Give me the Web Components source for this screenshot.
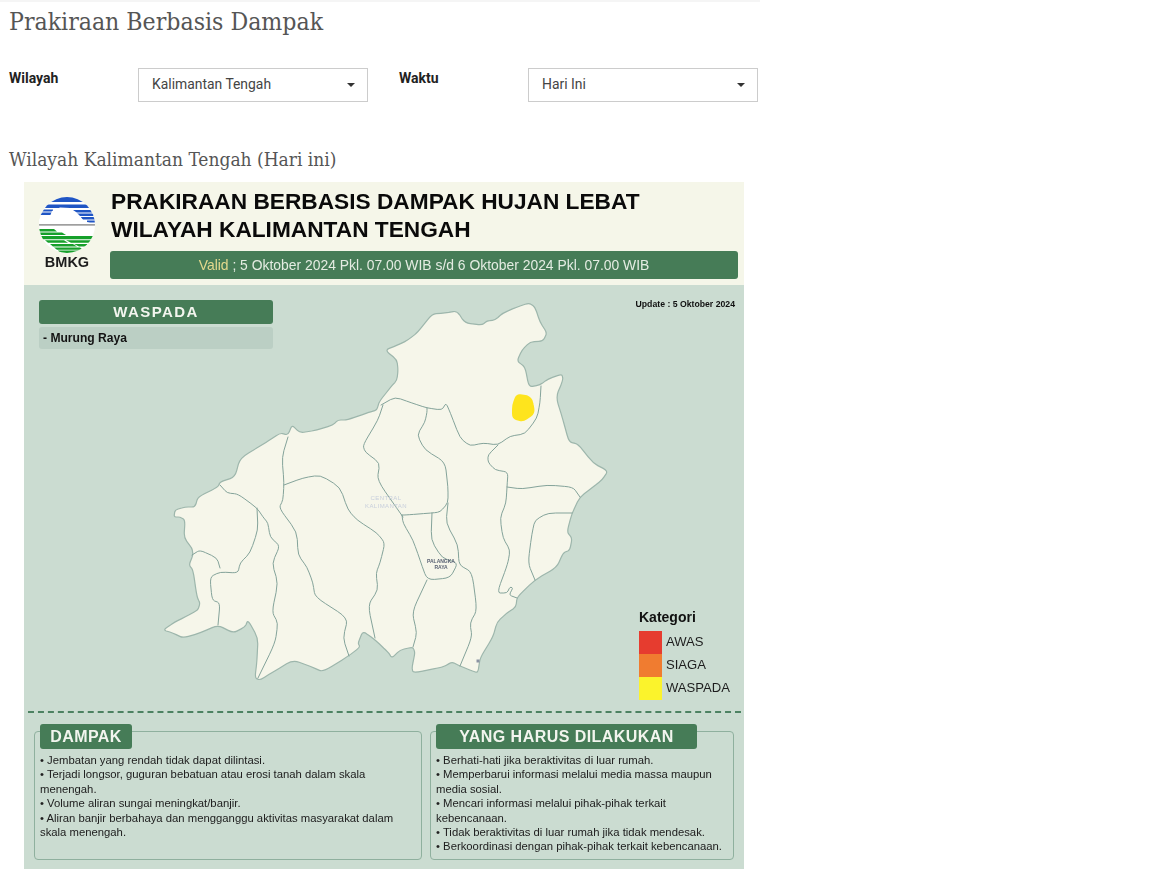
<!DOCTYPE html>
<html lang="id">
<head>
<meta charset="utf-8">
<title>Prakiraan Berbasis Dampak</title>
<style>
html,body{margin:0;padding:0;background:#fff;overflow:hidden}
body{font-family:Roboto,"Liberation Sans",sans-serif}
</style>
</head>
<body>
<impact-page></impact-page>
<script>
class PageSelect extends HTMLElement{
  constructor(){super();this.attachShadow({mode:'open'}).innerHTML=`<style>
  :host{display:flex;align-items:center;justify-content:space-between;box-sizing:border-box;width:230px;height:34px;border:1px solid #ccc;background:#fff;padding:0 12px 2px 13px;font:13.9px Roboto,sans-serif;color:#444}
  i{width:0;height:0;border:4px solid transparent;border-top-color:#333;border-bottom:0;margin-top:2px}
  </style><slot></slot><i></i>`;}
}
customElements.define('page-select',PageSelect);

class BmkgLogo extends HTMLElement{
  constructor(){super();this.attachShadow({mode:'open'}).innerHTML=`<style>
  :host{display:flex;flex-direction:column;align-items:center;width:56px;flex:none;margin-top:15px}
  svg{display:block}
  span{font:bold 14.5px "Liberation Sans",sans-serif;color:#1c1c1c;line-height:16px;margin-top:1px}
  </style>
  <svg width="56" height="56" viewBox="39 197 56 56">
  <defs><clipPath id="c"><circle cx="67" cy="225" r="28"/></clipPath></defs>
  <g clip-path="url(#c)">
    <rect x="39" y="197" width="56" height="56" fill="#fff"/>
    <g fill="#1f55c4">
      <rect x="39" y="197" width="56" height="5"/>
      <rect x="39" y="204.500" width="56" height="3.500"/>
      <rect x="39" y="209.500" width="14" height="2"/>
      <rect x="39" y="212.500" width="14" height="2.500"/>
      <rect x="70" y="210" width="25" height="2.500"/>
      <rect x="72" y="213.500" width="23" height="2.500"/>
      <rect x="80" y="217" width="15" height="2.500"/>
      <rect x="87" y="220.500" width="8" height="2"/>
    </g>
    <path fill="#fff" d="M50 216 L52 211 L60 207.500 L70 208 L76 212 L80 216 L84 221 L90 223 L95 225 L39 225 L39 218Z"/>
    <rect x="39" y="224.300" width="56" height="1.200" fill="#777"/>
    <g fill="#16a02a">
      <path d="M39 229h15l3 2.400H39z"/>
      <path d="M39 232.500h23l4 2.600H39z"/>
      <path d="M41 236h53l-1 3.200H42z"/>
      <path d="M45 240.200h19l4 2.600H48z"/>
      <path d="M66 240.200h25l-2 2.600H71z"/>
      <path d="M50 244h23l4 2.600H53z"/>
      <path d="M74 244h14l-2 2.600H79z"/>
      <path d="M54 247.500h26l3 2.200H57z"/>
      <path d="M58 250.500h22l-2 3H60z"/>
    </g>
  </g></svg><span>BMKG</span>`;}
}
customElements.define('bmkg-logo',BmkgLogo);

class PosterHeader extends HTMLElement{
  constructor(){super();this.attachShadow({mode:'open'}).innerHTML=`<style>
  :host{display:flex;box-sizing:border-box;height:103px;background:#f5f6e9;padding:0 6px 0 15px;gap:15px}
  .m{flex:1;display:flex;flex-direction:column;min-width:0;padding-top:5px}
  h2{margin:0 0 8px 1px;font:bold 22.7px/28px "Liberation Sans",sans-serif;color:#0a0a0a;white-space:nowrap}
  .v{height:28px;background:#467c57;border-radius:3px;color:#e4ece2;font:13.9px/28px "Liberation Sans",sans-serif;text-align:center}
  .v b{font-weight:normal;color:#e3d98d}
  </style><bmkg-logo></bmkg-logo><div class="m"><h2>PRAKIRAAN BERBASIS DAMPAK HUJAN LEBAT<br>WILAYAH KALIMANTAN TENGAH</h2>
  <div class="v"><b>Valid</b> ; 5 Oktober 2024 Pkl. 07.00 WIB s/d 6 Oktober 2024 Pkl. 07.00 WIB</div></div>`;}
}
customElements.define('poster-header',PosterHeader);

class LegendItem extends HTMLElement{
  constructor(){super();this.attachShadow({mode:'open'}).innerHTML=`<style>
  :host{display:flex;align-items:center;height:23px;gap:4px;font:13.1px "Liberation Sans",sans-serif;color:#1d1d1d}
  i{width:23px;height:23px;background:var(--c)}
  span{margin-top:-2px}
  </style><i></i><span><slot></slot></span>`;}
}
customElements.define('legend-item',LegendItem);

class ProvinceMap extends HTMLElement{
  constructor(){
    super();
    const r=n=>+n.toFixed(1);
    const lerp=(a,b,t)=>[r(a[0]+(b[0]-a[0])*t),r(a[1]+(b[1]-a[1])*t)];
    const T=.32;
    const smooth=(p,closed)=>{
      let d='';
      const n=p.length;
      if(closed){
        for(let i=0;i<n;i++){
          const a=lerp(p[i],p[(i-1+n)%n],T),b=lerp(p[i],p[(i+1)%n],T);
          d+=(i?'L':'M')+a[0]+' '+a[1]+'Q'+p[i][0]+' '+p[i][1]+' '+b[0]+' '+b[1];
        }
        return d+'Z';
      }
      d='M'+p[0][0]+' '+p[0][1];
      for(let i=1;i<n-1;i++){
        const a=lerp(p[i],p[i-1],T),b=lerp(p[i],p[i+1],T);
        d+='L'+a[0]+' '+a[1]+'Q'+p[i][0]+' '+p[i][1]+' '+b[0]+' '+b[1];
      }
      return d+'L'+p[n-1][0]+' '+p[n-1][1];
    };
    const outer=[[379,402],[390,388],[397,380],[398,370],[397,360],[385,350],[398,345],[408,340],[418,332],[432,314],[445,313],[457,311],[465,323],[482,325],[487,321],[495,320],[503,313],[517,307],[529,303],[535,307],[540,322],[547,333],[543,341],[530,342],[522,350],[517,361],[525,367],[529,387],[540,385],[548,379],[562,374],[563,380],[556,397],[563,420],[569,442],[578,444],[593,463],[608,471],[602,480],[593,487],[580,497],[572,513],[567,532],[572,538],[570,550],[563,553],[557,567],[535,580],[517,597],[516,607],[507,613],[497,622],[493,637],[480,658],[478,673],[470,670],[460,666],[452,662],[443,667],[413,673],[412,667],[415,653],[413,647],[400,650],[392,658],[388,652],[375,640],[363,631],[358,643],[360,647],[350,655],[323,672],[312,667],[293,660],[273,672],[260,680],[255,678],[257,660],[258,638],[248,620],[245,627],[233,633],[218,625],[200,633],[183,638],[173,633],[163,630],[175,622],[185,617],[198,610],[200,603],[197,597],[193,570],[189,565],[193,555],[192,548],[184,538],[185,520],[180,517],[174,517],[175,510],[185,507],[195,507],[198,497],[218,487],[220,482],[235,477],[240,458],[267,442],[280,433],[288,435],[292,425],[300,433],[317,430],[333,425],[338,420],[347,420],[370,412],[377,410]];
    const lines=[
     [[381,405],[395,397],[412,403],[427,408],[442,410],[446,403],[450,412],[460,438],[470,446],[483,443],[498,445],[510,436],[525,434],[537,418],[540,403],[541,386]],
     [[498,445],[488,455],[488,462],[495,470],[508,472],[507,487],[506,503],[500,518],[503,538],[510,550],[508,563],[497,593],[507,593],[510,587],[513,588],[509,595],[517,598]],
     [[507,487],[522,489],[547,485],[573,487],[580,497]],
     [[572,513],[548,513],[535,520],[532,533],[528,563],[535,580]],
     [[427,408],[427,412],[425,422],[417,435],[425,450],[445,462],[448,487],[448,503],[440,512],[432,513],[405,515],[402,515]],
     [[448,503],[446,523],[458,545],[459,565],[472,572],[477,610],[470,623],[472,637],[460,666]],
     [[432,513],[431,540],[442,558],[458,563],[450,578],[427,580],[420,560],[413,540],[403,523],[402,515]],
     [[427,580],[412,612],[417,633],[413,647]],
     [[383,405],[378,420],[363,445],[365,452],[380,463],[377,480],[403,517]],
     [[288,437],[282,457],[284,483],[283,500],[279,508],[297,532],[298,555],[307,567],[313,583],[315,597],[348,618],[343,638],[349,656]],
     [[284,485],[303,478],[320,475],[340,487],[348,510],[357,520],[377,533],[385,543],[380,563],[376,573],[378,590],[368,605],[375,638]],
     [[220,485],[227,493],[238,494],[257,508],[263,517],[268,523],[270,537],[280,546],[272,563],[278,583],[272,612],[278,623],[275,643],[258,678]],
     [[257,508],[258,530],[250,553],[240,563],[238,573],[220,572],[210,577],[212,600],[220,603],[218,625]],
     [[192,555],[200,550],[217,558],[220,568]]
    ];
    const blob=[[517,395],[527,396],[532,400],[534,413],[523,421],[513,418],[513,405]];
    this.attachShadow({mode:'open'}).innerHTML=`<style>
    :host{display:block;width:720px;height:426px}
    svg{display:block}
    text{font-family:"Liberation Sans",sans-serif;text-anchor:middle}
    </style>
    <svg width="720" height="426" viewBox="24 285 720 426">
      <path d="${smooth(outer,true)}" fill="#f6f6ea" stroke="#9db6ac" stroke-width="1.2" stroke-linejoin="round"/>
      <g fill="none" stroke="#84a39a" stroke-width="1" stroke-linejoin="round" stroke-linecap="round">
        ${lines.map(l=>`<path d="${smooth(l,false)}"/>`).join('')}
      </g>
      <path d="${smooth(blob,true)}" fill="#fee41d" stroke="#fee41d" stroke-width="2"/>
      <text x="386" y="500" font-size="6" fill="#c8cfdc" letter-spacing=".4">CENTRAL</text>
      <text x="386" y="508" font-size="6" fill="#c8cfdc" letter-spacing=".4">KALIMANTAN</text>
      <text x="441" y="563" font-size="5" font-weight="bold" fill="#5a6274">PALANGKA</text>
      <text x="441" y="568.500" font-size="5" font-weight="bold" fill="#5a6274">RAYA</text>
      <rect x="476.500" y="659.500" width="3" height="3" fill="#8b93a3"/>
    </svg>`;
  }
}
customElements.define('province-map',ProvinceMap);

class InfoBox extends HTMLElement{
  constructor(){super();this.attachShadow({mode:'open'}).innerHTML=`<style>
  :host{display:block;position:relative;box-sizing:border-box;height:129px;border:1px solid #8fb09e;border-radius:4px;padding:21px 4px 0 5px;font:11.3px/14.4px "Liberation Sans",sans-serif;color:#202020}
  h3{position:absolute;top:-8px;left:5px;width:var(--tab-w,92px);height:25px;margin:0;box-sizing:border-box;background:#467c57;border-radius:3px;color:#f2f5ee;font:bold 16px/25px "Liberation Sans",sans-serif;letter-spacing:.45px;text-align:center}
  </style><h3><slot name="title"></slot></h3><slot></slot>`;}
}
customElements.define('info-box',InfoBox);

class PosterBody extends HTMLElement{
  constructor(){super();this.attachShadow({mode:'open'}).innerHTML=`<style>
  :host{display:block;height:584px;background:#cbdcd1}
  .map{position:relative;height:426px}
  .w{position:absolute;left:15px;top:15px;width:234px}
  .w h3{margin:0 0 3px;height:24px;background:#467c57;border-radius:3px;color:#f2f5ee;font:bold 15px/23px "Liberation Sans",sans-serif;letter-spacing:1.4px;text-align:center}
  .w p{margin:0;height:22px;padding-left:4px;background:#bbcfc4;border-radius:3px;font:bold 12.1px/22px "Liberation Sans",sans-serif;color:#141414}
  .u{position:absolute;right:9px;top:14px;font:bold 8.7px/11px "Liberation Sans",sans-serif;color:#111}
  .l{position:absolute;left:615px;top:323px}
  .l h4{margin:0 0 4px;font:bold 14px/19px "Liberation Sans",sans-serif;color:#111}
  .low{border-top:2px dashed #4d8262;margin:0 3px 0 4px;padding:18px 6px 0 6px;display:grid;grid-template-columns:388px 304px;column-gap:8px}
  .b2{--tab-w:261px}
  </style>
  <div class="map">
    <province-map></province-map>
    <div class="w"><h3>WASPADA</h3><p>- Murung Raya</p></div>
    <div class="u">Update : 5 Oktober 2024</div>
    <div class="l"><h4>Kategori</h4>
      <legend-item style="--c:#e63c2f">AWAS</legend-item>
      <legend-item style="--c:#f07c30">SIAGA</legend-item>
      <legend-item style="--c:#fbf32c">WASPADA</legend-item>
    </div>
  </div>
  <div class="low">
    <info-box><span slot="title">DAMPAK</span>
      • Jembatan yang rendah tidak dapat dilintasi.<br>
      • Terjadi longsor, guguran bebatuan atau erosi tanah dalam skala<br>menengah.<br>
      • Volume aliran sungai meningkat/banjir.<br>
      • Aliran banjir berbahaya dan mengganggu aktivitas masyarakat dalam<br>skala menengah.
    </info-box>
    <info-box class="b2"><span slot="title">YANG HARUS DILAKUKAN</span>
      • Berhati-hati jika beraktivitas di luar rumah.<br>
      • Memperbarui informasi melalui media massa maupun<br>media sosial.<br>
      • Mencari informasi melalui pihak-pihak terkait<br>kebencanaan.<br>
      • Tidak beraktivitas di luar rumah jika tidak mendesak.<br>
      • Berkoordinasi dengan pihak-pihak terkait kebencanaan.
    </info-box>
  </div>`;}
}
customElements.define('poster-body',PosterBody);

class ImpactPage extends HTMLElement{
  constructor(){super();this.attachShadow({mode:'open'}).innerHTML=`<style>
  :host{display:block;width:760px;height:869px;overflow:hidden;border-top:2px solid #f5f5f5;box-sizing:border-box}
  h1{margin:0;padding:5px 0 0 9px;height:64px;box-sizing:border-box;font:normal 24.6px/30px "DejaVu Serif Condensed","DejaVu Serif",serif;color:#555}
  .f{display:grid;grid-template-columns:129px 230px 31px 129px 230px;padding-left:9px;height:34px;margin-top:2px;font:bold 14px/20px Roboto,sans-serif;color:#222}
  h2{margin:44px 0 0;padding-left:9px;height:36px;font:normal 19px/26px "DejaVu Serif Condensed","DejaVu Serif",serif;color:#555}
  .p{width:720px;margin-left:24px;filter:blur(.35px)}
  </style>
  <h1>Prakiraan Berbasis Dampak</h1>
  <div class="f"><span>Wilayah</span><page-select>Kalimantan Tengah</page-select><span></span><span>Waktu</span><page-select>Hari Ini</page-select></div>
  <h2>Wilayah Kalimantan Tengah (Hari ini)</h2>
  <div class="p"><poster-header></poster-header><poster-body></poster-body></div>`;}
}
customElements.define('impact-page',ImpactPage);
</script>
</body>
</html>
